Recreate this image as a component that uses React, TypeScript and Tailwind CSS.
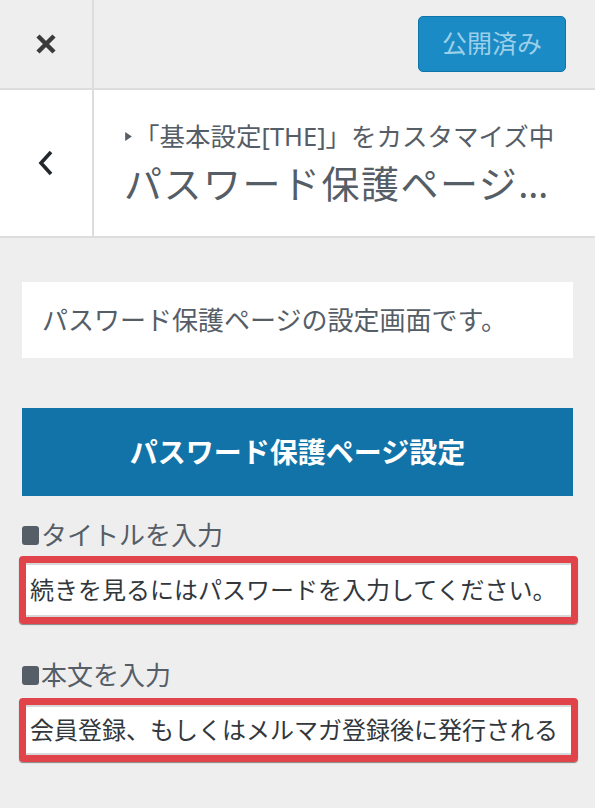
import type { ReactNode } from "react";

const FONT = { fontFamily: '"Noto Sans", "Noto Sans CJK JP", sans-serif' };

function Label({ children }: { children: ReactNode }) {
  return (
    <div className="flex items-center ml-[22px] text-[26px] leading-[34px] text-[#555d66]">
      <span className="w-[17px] h-[19px] rounded-[3px] bg-[#555d66] mr-[2px]" />
      {children}
    </div>
  );
}

function Field({ value, h }: { value: string; h: string }) {
  return (
    <div className="ml-[19px] w-[559px] border-[7px] border-[#e0434a] rounded-[4px] shadow-[0_1px_1px_rgba(0,0,0,0.45)]">
      <div
        className={`${h} bg-white border-y-2 border-[#d8d8d8] pl-[4px] flex items-center overflow-hidden whitespace-nowrap text-[24px] text-[#32373c]`}
      >
        {value}
      </div>
    </div>
  );
}

export default function App() {
  return (
    <div className="min-h-screen bg-[#eeeeee] flex flex-col" style={FONT}>
      {/* top bar */}
      <header className="h-[90px] flex border-b-2 border-[#dddddd]">
        <div className="w-[94px] border-r-2 border-[#dddddd] flex items-center justify-center">
          <svg width="22" height="22" viewBox="0 0 22 22">
            <path d="M3 3 L19 19 M19 3 L3 19" stroke="#3a3a3a" strokeWidth="4.5" strokeLinecap="butt" />
          </svg>
        </div>
        <div className="flex-1 flex items-start justify-end pt-[16px] pr-[29px]">
          <button className="w-[148px] h-[56px] rounded-[5px] bg-[#1a8bc4] border border-[#0f74a8] text-[25px] text-[#9ccfe9] flex items-center justify-center">
            公開済み
          </button>
        </div>
      </header>

      {/* section title */}
      <div className="h-[148px] flex bg-white border-b-2 border-[#dddddd]">
        <div className="w-[94px] border-r-2 border-[#dddddd] flex items-center justify-center">
          <svg width="16" height="26" viewBox="0 0 16 26">
            <path d="M13 2 L3 13 L13 24" fill="none" stroke="#23282d" strokeWidth="3.6" />
          </svg>
        </div>
        <div className="flex-1 min-w-0 pl-[30px] pr-[10px] flex flex-col justify-center">
          <div className="flex items-center text-[25.5px] leading-[32px] text-[#555d66] whitespace-nowrap">
            <svg width="9" height="11" viewBox="0 0 8 10" className="mr-[1px]">
              <path d="M1 1 L7 5 L1 9 Z" fill="#555d66" />
            </svg>
            「基本設定[THE]」をカスタマイズ中
          </div>
          <div className="mt-[8px] text-[38px] leading-[46px] tracking-[1.5px] text-[#555d66] whitespace-nowrap">
            パスワード保護ページ…
          </div>
        </div>
      </div>

      {/* content */}
      <div className="flex flex-col pb-[40px]">
        <div className="mt-[44px] mx-[22px] h-[76px] bg-white flex items-center pl-[20px] text-[26px] text-[#555d66]">
          パスワード保護ページの設定画面です。
        </div>

        <div className="mt-[50px] mx-[22px] h-[88px] bg-[#1173a8] flex items-center justify-center text-[28px] font-bold text-white">
          パスワード保護ページ設定
        </div>

        <div className="mt-[22px]">
          <Label>タイトルを入力</Label>
        </div>
        <div className="mt-[4px]">
          <Field h="h-[54px]" value="続きを見るにはパスワードを入力してください。" />
        </div>

        <div className="mt-[34px]">
          <Label>本文を入力</Label>
        </div>
        <div className="mt-[6px]">
          <Field h="h-[50px]" value="会員登録、もしくはメルマガ登録後に発行される" />
        </div>
      </div>
    </div>
  );
}
